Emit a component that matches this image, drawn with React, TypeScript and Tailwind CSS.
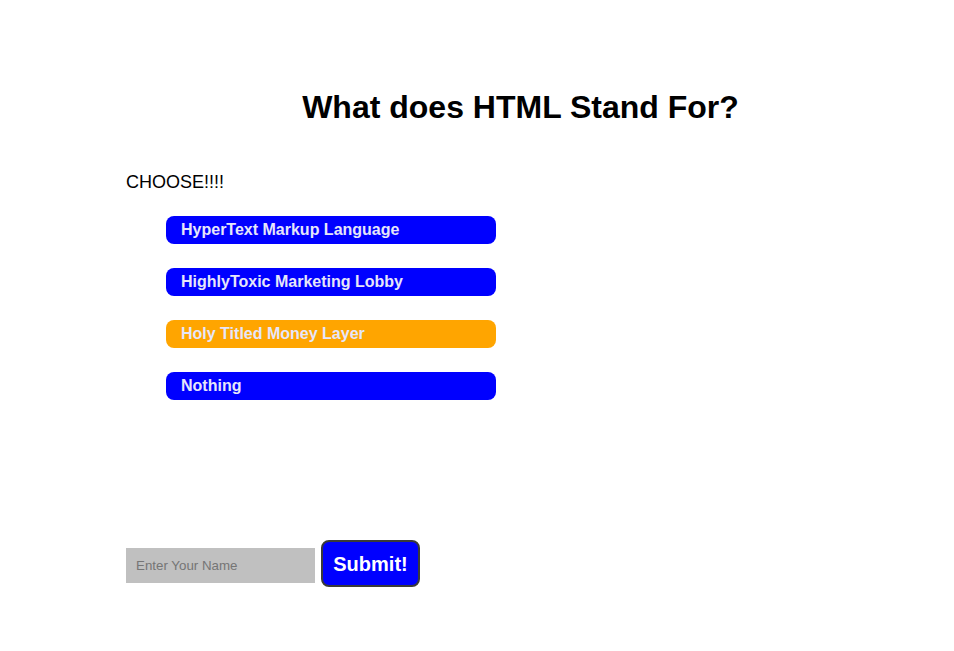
const answers = [
  { text: "HyperText Markup Language", active: false },
  { text: "HighlyToxic Marketing Lobby", active: false },
  { text: "Holy Titled Money Layer", active: true },
  { text: "Nothing", active: false },
];

export default function App() {
  return (
    <div
      className="min-h-screen bg-white pt-[89px] pl-[126px] pr-[39px] text-black"
      style={{ fontFamily: '"Liberation Sans", Arial, sans-serif' }}
    >
      {/* Question */}
      <h1 className="text-center text-[32px] font-bold leading-[37px]">What does HTML Stand For?</h1>

      <p className="mt-[46px] text-[18px] leading-[21px]">CHOOSE!!!!</p>

      {/* Answers */}
      <div className="mt-[23px] ml-[40px] flex flex-col gap-[24px]">
        {answers.map((a) => (
          <button
            key={a.text}
            className={
              "h-[28px] w-[330px] rounded-[8px] pl-[15px] text-left text-[16px] font-bold leading-[28px] text-[#e6e6fa] " +
              (a.active ? "bg-[#ffa500]" : "bg-[#0000ff]")
            }
          >
            {a.text}
          </button>
        ))}
      </div>

      {/* Name form */}
      <div className="mt-[140px] flex items-start gap-[6px]">
        <input
          type="text"
          placeholder="Enter Your Name"
          className="mt-[8px] h-[35px] w-[189px] bg-[#c0c0c0] px-[10px] text-[13.33px] text-black outline-none placeholder:text-[#757575]"
        />
        <button className="h-[47px] w-[99px] rounded-[8px] border-2 border-[#3a3a3a] bg-[#0000ff] text-[20px] font-bold text-white">
          Submit!
        </button>
      </div>
    </div>
  );
}
